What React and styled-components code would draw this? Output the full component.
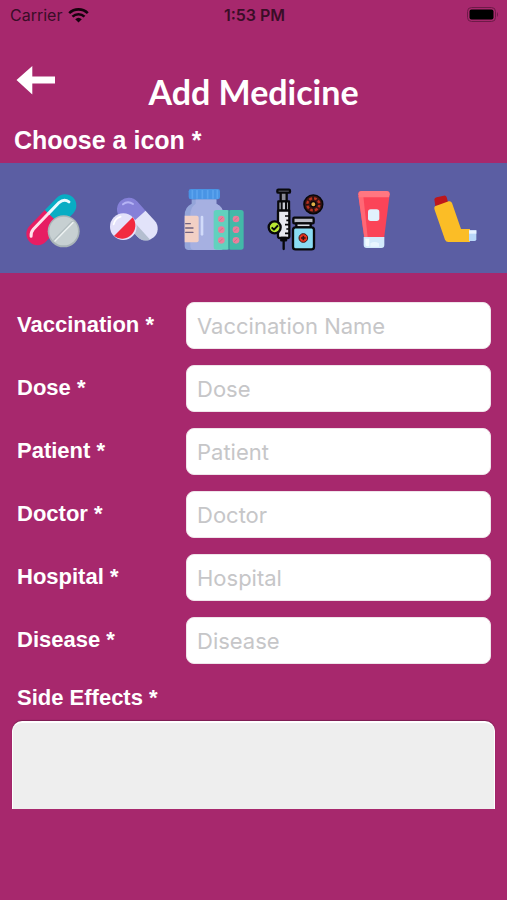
import React, { useState } from "react";
import styled, { createGlobalStyle } from "styled-components";

const GlobalStyle = createGlobalStyle`
  * {
    box-sizing: border-box;
  }

  body {
    margin: 0;
    background: #a7286d;
    font-family: "Liberation Sans", Arial, sans-serif;
  }
`;

const Screen = styled.div`
  display: flex;
  flex-direction: column;
  min-height: 100vh;
  color: #fff;
`;

const StatusBar = styled.div`
  display: grid;
  grid-template-columns: 1fr auto 1fr;
  align-items: center;
  height: 30px;
  padding: 0 8px 0 10px;
  font-family: Inter, sans-serif;
  font-size: 16px;
  color: #3a0d27;
`;

const Carrier = styled.div`
  display: flex;
  align-items: center;
  gap: 6px;
`;

const Time = styled.span`
  font-weight: 600;
`;

const Battery = styled.svg`
  justify-self: end;
`;

const Header = styled.header`
  display: grid;
  grid-template-columns: 56px 1fr 56px;
  padding-top: 34px;
`;

const BackButton = styled.button`
  display: flex;
  align-self: start;
  padding: 0 0 0 16px;
  border: 0;
  background: none;
  cursor: pointer;
`;

const Title = styled.h1`
  margin: 8px 0 0;
  font-family: "Trebuchet MS", Lato, sans-serif;
  font-size: 34px;
  line-height: 40px;
  font-weight: 700;
  text-align: center;
`;

const SectionTitle = styled.h2`
  margin: 0;
  padding: 12px 14px 7px;
  font-size: 25px;
  line-height: 32px;
`;

const IconBar = styled.div`
  display: flex;
  align-items: center;
  height: 110px;
  padding: 0 12px;
  background: #5b5ea3;
`;

const IconButton = styled.button`
  display: flex;
  flex: 1;
  justify-content: center;
  padding: 0;
  border: 0;
  background: none;
  cursor: pointer;
`;

const Form = styled.form`
  display: flex;
  flex-direction: column;
  gap: 16px;
  padding: 29px 16px 0;
`;

const Field = styled.div`
  display: grid;
  grid-template-columns: 170px 1fr;
  align-items: center;
`;

const Label = styled.label`
  padding: 0 0 2px 1px;
  font-size: 22px;
  line-height: 28px;
  font-weight: 700;
`;

const Input = styled.input`
  width: 100%;
  height: 47px;
  padding: 0 10px;
  border: 1px solid #efe4ea;
  border-radius: 8px;
  background: #fff;
  font-family: Inter, sans-serif;
  font-size: 22px;
  color: #222;

  &::placeholder {
    color: #c6c6c8;
    opacity: 1;
  }
`;

const Notes = styled.div`
  display: flex;
  flex-direction: column;
  gap: 7px;
  padding: 20px 12px 0;

  label {
    padding-left: 5px;
  }
`;

const TextArea = styled.textarea`
  width: 100%;
  height: 88px;
  padding: 10px;
  border: 1px solid #fff;
  border-top-width: 2px;
  border-bottom-width: 0;
  border-radius: 10px 10px 0 0;
  background: #eee;
  box-shadow: 0 -1px 1px #7c1c50;
  font: 22px Inter, sans-serif;
  resize: none;
`;

const Wifi = () => (
  <svg width='21' height='16' viewBox='0 0 21 16' fill='none' stroke='#16020d' strokeWidth='2.6'>
    <path d='M1.2 6.1a13.4 13.4 0 0 1 18.6 0M4.5 9.6a8.7 8.7 0 0 1 12 0' />
    <path d='M10.5 15.6l-3.3-3.3a4.8 4.8 0 0 1 6.6 0z' fill='#16020d' stroke='none' />
  </svg>
);

const PillsIcon = () => (
  <svg width='80' height='80' viewBox='7 -6 240 240'>
    <g transform='rotate(44 125 119)'>
      <path d='M91 119V60a34 34 0 0 1 68 0v59z' fill='#08adc4' />
      <path d='M91 112h68v66a34 34 0 0 1-68 0z' fill='#e71d63' />
      <path d='M106 111V66q2-20 20-22' fill='none' stroke='#e9fbff' strokeWidth='9' strokeLinecap='round' />
      <path d='M106 113v64q1 13 10 20' fill='none' stroke='#ffe1ec' strokeWidth='9' strokeLinecap='round' />
    </g>
    <circle cx='162' cy='154' r='48' fill='#a9b4b8' />
    <circle cx='162' cy='153' r='43' fill='#c7d0d2' />
    <path d='M135 181l53-54' stroke='#b3bec1' strokeWidth='9' strokeLinecap='round' />
    <path d='M136 183l54-55' stroke='#edf2f2' strokeWidth='5' strokeLinecap='round' />
  </svg>
);

const CapsuleIcon = () => (
  <svg width='80' height='80' viewBox='248 -6 240 240'>
    <g transform='rotate(-42 381 117)'>
      <path d='M346 117V78a35 35 0 0 1 70 0v39z' fill='#8580d8' />
      <path d='M346 115h70v41a35 35 0 0 1-70 0z' fill='#e2e3fa' />
      <path d='M346 115h22v74a35 35 0 0 1-22-32z' fill='#b4bed0' />
    </g>
    <path d='M338 73q14-12 30-1' fill='none' stroke='#b5b3f5' strokeWidth='6' strokeLinecap='round' />
    <circle cx='339' cy='140' r='40' fill='#e3e1fa' />
    <path d='M367 112a40 40 0 0 1-56 56z' fill='#f2293f' />
    <path d='M310 133q4-18 21-23' fill='none' stroke='#fff' strokeWidth='5' strokeLinecap='round' />
  </svg>
);

const BottleIcon = () => (
  <svg width='80' height='80' viewBox='10 -6 240 240'>
    <path d='M66 58h74v13q22 9 22 36v91q0 12-12 12H57q-12 0-12-12v-91q0-27 21-36z' fill='#94a5d9' />
    <path d='M78 58h62v13q22 9 22 36v91q0 12-12 12H74q-12 0-12-12v-91q0-27 16-36z' fill='#a6b0e1' />
    <rect x='57' y='27' width='94' height='31' rx='7' fill='#4994e5' />
    <path d='M68 30v26M82 30v26M98 30v26M114 30v26M130 30v26M143 30v26' stroke='#5ba3ee' strokeWidth='5' />
    <path d='M45 107h36q6 0 6 6v68q0 6-6 6H45z' fill='#f2d0c5' />
    <path d='M48 131h14M48 144h22M48 157h22' stroke='#726380' strokeWidth='4' strokeLinecap='round' />
    <path d='M97 111v52' stroke='#d1dbfa' strokeWidth='8' strokeLinecap='round' />
    <rect x='132' y='90' width='48' height='119' rx='8' fill='#62d1be' />
    <rect x='176' y='90' width='46' height='119' rx='8' fill='#43b9a8' />
    <path d='M178 91v117' stroke='#328d94' strokeWidth='3' />
    {[117, 149, 181].map(y => (
      <g key={y} fill='#e9819c'>
        <circle cx='155' cy={y} r='10' />
        <circle cx='199' cy={y} r='10' />
        <path d={`M149 ${y + 5}l10-10M193 ${y + 5}l10-10`} stroke='#d66c8c' strokeWidth='3' />
      </g>
    ))}
  </svg>
);

const VaccineIcon = () => (
  <svg width='80' height='80' viewBox='251 -6 240 240' stroke='#08080b' strokeWidth='7' strokeLinejoin='round'>
    <path d='M340 180v27' strokeLinecap='round' />
    <rect x='331' y='35' width='18' height='30' fill='#8b8c98' />
    <rect x='321' y='29' width='38' height='9' rx='3' fill='#77788b' />
    <path d='M324 64h32v28h-32z' fill='#c8cad1' />
    <path d='M334 65v27M347 65v27' strokeWidth='6' />
    <path d='M323 92h34v77q0 5-5 5h-24q-5 0-5-5z' fill='#e8e9f0' />
    <path d='M333 174h14v7h-14z' fill='#aeb0b8' />
    <path d='M344 108h13M348 121h9M344 134h13M348 147h9M344 160h13' strokeWidth='5' />
    <circle cx='313' cy='142' r='18' fill='#b8e832' />
    <path d='M304 142l7 7 12-13' fill='none' strokeWidth='6' />
    <rect x='369' y='113' width='61' height='17' rx='3' fill='#b7bac4' />
    <path d='M378 130h43v12h-43z' fill='#d9dce4' />
    <path d='M375 142h49q7 0 7 8v50q0 8-8 8h-47q-8 0-8-8v-50q0-8 7-8z' fill='#8adcf3' />
    <circle cx='399' cy='174' r='13' fill='#eb3520' stroke='#3a1110' strokeWidth='3' />
    <path d='M399 167v14M392 174h14' stroke='#3a1110' strokeWidth='5' />
    <circle cx='429' cy='73' r='28' fill='#3f1413' strokeWidth='5' />
    <circle cx='429' cy='73' r='18' fill='none' stroke='#b93320' strokeWidth='7' strokeDasharray='9 5' />
    <circle cx='429' cy='73' r='8' fill='#e2b047' strokeWidth='4' />
    <path d='M429 50v12M429 84v12M406 73h12M440 73h12' stroke='#251010' strokeWidth='3' />
  </svg>
);

const TubeIcon = () => (
  <svg width='80' height='80' viewBox='13 -6 240 240'>
    <path d='M86 43q0-10 10-10h74q10 0 10 10l-17 134h-59z' fill='#fb4458' />
    <path d='M86 48h15l13 124h-10z' fill='#ff6875' />
    <path d='M86 43q0-10 10-10h74q10 0 10 10l-2 9H88z' fill='#ff7781' />
    <rect x='115' y='88' width='34' height='35' rx='8' fill='#e1f1fd' />
    <path d='M102 171h62v24q0 9-9 9h-44q-9 0-9-9z' fill='#d3eafb' />
    <path d='M107 176h12v23h-6q-6 0-6-7z' fill='#f1faff' />
    <path d='M122 190q12-8 26 0v10h-26z' fill='#e8f6ff' />
  </svg>
);

const InhalerIcon = () => (
  <svg width='80' height='80' viewBox='254 -6 240 240'>
    <path d='M315 78l-3-20q1-5 7-6l21-5q8-1 9 5l5 18z' fill='#bd171c' />
    <path d='M314 79l41-15q7-2 10 5l27 78h27v39h-65q-7 0-10-7l-31-89q-3-8 1-11z' fill='#fbbd26' />
    <path d='M416 151h22v27q0 5-5 5h-17z' fill='#b8d7f8' />
    <path d='M416 151h22v10h-22z' fill='#e7f3ff' />
  </svg>
);

const icons = [
  { name: "Pills", Icon: PillsIcon },
  { name: "Capsule", Icon: CapsuleIcon },
  { name: "Bottle", Icon: BottleIcon },
  { name: "Vaccine", Icon: VaccineIcon },
  { name: "Tube", Icon: TubeIcon },
  { name: "Inhaler", Icon: InhalerIcon }
];

const fields = [
  { label: "Vaccination", placeholder: "Vaccination Name" },
  { label: "Dose", placeholder: "Dose" },
  { label: "Patient", placeholder: "Patient" },
  { label: "Doctor", placeholder: "Doctor" },
  { label: "Hospital", placeholder: "Hospital" },
  { label: "Disease", placeholder: "Disease" }
];

const App = () => {
  const [icon, setIcon] = useState(null);

  return (
    <Screen>
      <GlobalStyle />
      <StatusBar>
        <Carrier>
          Carrier
          <Wifi />
        </Carrier>
        <Time>1:53 PM</Time>
        <Battery width='32' height='16' viewBox='0 0 32 16'>
          <rect x='0.5' y='0.5' width='28' height='14' rx='4' fill='none' stroke='#6d1a47' />
          <rect x='2.5' y='2.5' width='24' height='10' rx='2' fill='#000' />
          <path d='M30 5q2 2.500 0 5z' fill='#6d1a47' />
        </Battery>
      </StatusBar>
      <Header>
        <BackButton type='button' aria-label='Back'>
          <svg width='40' height='32' viewBox='0 0 40 32' fill='#fff'>
            <path d='M0.500 16L16.300 2V12.500H39V19.500H16.300V30.500z' />
          </svg>
        </BackButton>
        <Title>Add Medicine</Title>
      </Header>
      <SectionTitle>Choose a icon *</SectionTitle>
      <IconBar>
        {icons.map(({ name, Icon }) => (
          <IconButton
            key={name}
            type='button'
            aria-label={name}
            aria-pressed={icon === name}
            onClick={() => setIcon(name)}
          >
            <Icon />
          </IconButton>
        ))}
      </IconBar>
      <Form>
        {fields.map(({ label, placeholder }) => (
          <Field key={label}>
            <Label htmlFor={label}>{label} *</Label>
            <Input id={label} placeholder={placeholder} />
          </Field>
        ))}
      </Form>
      <Notes>
        <Label htmlFor='effects'>Side Effects *</Label>
        <TextArea id='effects' />
      </Notes>
    </Screen>
  );
};

export default App;
